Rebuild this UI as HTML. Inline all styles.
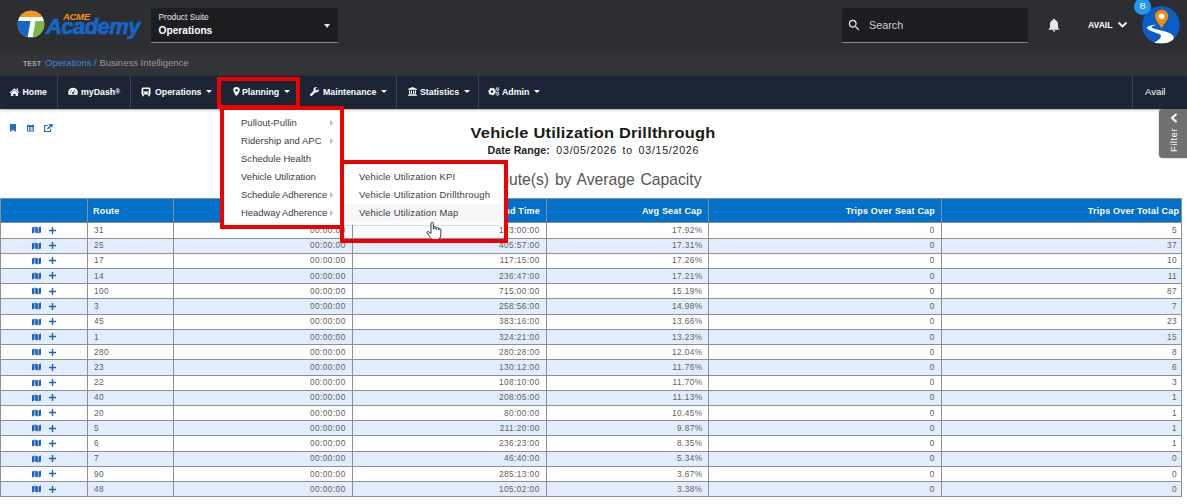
<!DOCTYPE html>
<html><head><meta charset="utf-8">
<style>
*{box-sizing:border-box;margin:0;padding:0}
html,body{width:1187px;height:504px;overflow:hidden;background:#fff;font-family:"Liberation Sans",sans-serif;}
.abs{position:absolute}
#top{position:absolute;left:0;top:0;width:1187px;height:51px;background:#2d2e32}
#crumb{position:absolute;left:0;top:51px;width:1187px;height:25px;background:#333437}
#nav{position:absolute;left:0;top:76px;width:1187px;height:32.6px;background:#1b2535;box-shadow:0 1px 2px rgba(0,0,0,.35)}
.ni{position:absolute;top:0;height:32px;line-height:32px;color:#fff;font-weight:bold;font-size:8.8px;white-space:nowrap}
.ni svg{margin-top:-1.6px}
.sep{position:absolute;top:0;width:1px;height:32px;background:#3a4556}
.caret{display:inline-block;width:0;height:0;border-left:3px solid transparent;border-right:3px solid transparent;border-top:3.2px solid #fff;vertical-align:middle;margin-left:5px;margin-top:-2px}
svg{display:inline-block;vertical-align:middle}
#tbl{position:absolute;left:0px;top:198.4px;width:1181px;border-collapse:collapse;table-layout:fixed;font-size:8.3px;color:#606060;letter-spacing:.42px}
#tbl th{background:#0070c9;color:#fff;font-weight:bold;font-size:9px;height:24px;border:1px solid #8a8f96;text-align:right;padding:0 6px 0 5px;letter-spacing:.2px}
#tbl th.l{text-align:left}
#tbl td{height:15.22px;border:1px solid #8c8f96;text-align:right;padding:0 6.3px 0 5px;line-height:13px}
#tbl th:last-child{padding-right:1.8px}
#tbl td:last-child{padding-right:3.9px}
#tbl td:nth-child(5){padding-right:5.4px}
#tbl td.l{text-align:left;padding-left:6px}
#tbl td.ic{text-align:left;padding:0}
#tbl tr.alt td{background:#e1edfd}
.mp{width:9px;height:8px;fill:#1c63b7;margin-left:31px;margin-top:-1px}
.pl{width:7px;height:7px;fill:#1c63b7;margin-left:8px;margin-top:-1px}
.mi{position:absolute;left:0;height:18px;line-height:18px;font-size:9.5px;color:#3c3c3c;white-space:nowrap;letter-spacing:.02px}
.sm2 .mi{letter-spacing:.17px}
.arr{position:absolute;width:0;height:0;border-top:3px solid transparent;border-bottom:3px solid transparent;border-left:3px solid #bbb}
.red{position:absolute;border:4px solid #ee0000}
</style></head><body>
<div id="top"></div>
<div id="crumb"></div>
<div id="nav"></div>

<!-- logo -->
<svg class="abs" style="left:17px;top:10px" width="28" height="28" viewBox="0 0 28 28">
<defs><clipPath id="lc"><circle cx="14" cy="14" r="13.3"/></clipPath></defs>
<g clip-path="url(#lc)">
<rect x="0" y="0" width="28" height="28" fill="#fff"/>
<rect x="0" y="0" width="28" height="7" fill="#f7931e"/>
<path d="M0 11 H13.5 L10.5 28 H0Z" fill="#1467c8"/>
<path d="M18.5 11 H28 V28 H15.5Z" fill="#7ab648"/>
</g></svg>
<div class="abs" style="left:63px;top:12px;font-size:9.5px;font-weight:bold;font-style:italic;color:#f7931e;line-height:10px;letter-spacing:-0.3px">ACME</div>
<div class="abs" style="left:46px;top:14px;font-size:22px;font-weight:bold;font-style:italic;color:#1467c8;line-height:26px;letter-spacing:-0.55px;-webkit-text-stroke:0.7px #1467c8">Academy</div>

<!-- product suite -->
<div class="abs" style="left:151px;top:8px;width:187px;height:35px;background:#1d1e21;border-bottom:1px solid #8a8a8a;border-radius:3px 3px 0 0"></div>
<div class="abs" style="left:158.5px;top:12px;font-size:8.4px;color:#e6e6e6;line-height:10px">Product Suite</div>
<div class="abs" style="left:158.5px;top:24.6px;font-size:10.2px;font-weight:bold;color:#fff;line-height:12px">Operations</div>
<div class="abs" style="left:324px;top:24px;width:0;height:0;border-left:3.5px solid transparent;border-right:3.5px solid transparent;border-top:4px solid #e6e6e6"></div>

<!-- search -->
<div class="abs" style="left:842px;top:8px;width:186px;height:35px;background:#1d1e21;border-bottom:1px solid #8a8a8a;border-radius:3px 3px 0 0"></div>
<svg class="abs" style="left:847px;top:18px" width="14.5" height="14.5" viewBox="0 0 24 24"><path fill="#e6e6e6" d="M15.5 14h-.79l-.28-.27A6.47 6.47 0 0 0 16 9.5 6.5 6.5 0 1 0 9.500 16c1.610 0 3.090-.59 4.230-1.570l.27.280v.79l5 4.990L20.490 19l-4.990-5zm-6 0C7.010 14 5 11.990 5 9.500S7.010 5 9.500 5 14 7.010 14 9.500 11.990 14 9.500 14z"/></svg>
<div class="abs" style="left:869px;top:19px;font-size:10.8px;color:#cfcfcf;line-height:13px">Search</div>

<!-- bell -->
<svg class="abs" style="left:1046px;top:17px" width="16" height="16" viewBox="0 0 24 24"><path fill="#e8e8e8" d="M12 22c1.100 0 2-.9 2-2h-4c0 1.100.89 2 2 2zm6-6v-5c0-3.070-1.640-5.640-4.500-6.320V4c0-.83-.67-1.500-1.500-1.500s-1.500.67-1.500 1.500v.68C7.630 5.360 6 7.920 6 11v5l-2 2v1h16v-1l-2-2z"/></svg>
<div class="abs" style="left:1088px;top:20px;font-size:8.6px;font-weight:bold;color:#fff;line-height:10px">AVAIL</div>
<svg class="abs" style="left:1117px;top:21px" width="11" height="8" viewBox="0 0 11 8"><path d="M1.5 1.500 L5.500 5.500 L9.500 1.500" fill="none" stroke="#fff" stroke-width="1.800"/></svg>

<!-- avatar -->
<svg class="abs" style="left:1142px;top:6.4px" width="38" height="38" viewBox="0 0 38 38">
<defs><clipPath id="ac"><circle cx="19" cy="19" r="19"/></clipPath></defs>
<g clip-path="url(#ac)">
<circle cx="19" cy="19" r="19" fill="#0a5cc8"/>
<path d="M14.5 18.4 C10 18.800 6 20 5 21.500 C4.500 23.500 10 25.500 16 27.500 C20 29 21 31.500 12 37 L27.500 37.500 C32 34.500 33 31 30 28.500 C26 25 12 23.500 9.500 21.500 C9 20.500 12 19.500 14.500 18.400Z" fill="#fff"/>
<path d="M19.600 3.700 C15.600 3.700 13 6.800 13 10.200 C13 14.200 17.200 17.500 19.600 22.400 C22 17.500 26.200 14.200 26.200 10.200 C26.200 6.800 23.600 3.700 19.600 3.700Z" fill="#f68b00"/>
<circle cx="19.600" cy="10.300" r="2.900" fill="#fff"/>
</g></svg>
<div class="abs" style="left:1134px;top:-2.200px;width:17.400px;height:17.400px;border-radius:50%;background:#2196f3;color:#fff;font-size:8.800px;line-height:17.400px;text-align:center"><span style="display:inline-block;transform:scaleX(1.25)">8</span></div>

<!-- breadcrumb -->
<div class="abs" style="left:23px;top:59px;font-size:6.8px;font-weight:bold;color:#a9a9a9;line-height:10px;letter-spacing:.2px">TEST</div>
<div class="abs" style="left:45px;top:57.4px;font-size:9.5px;line-height:11px;color:#9a9a9a;white-space:nowrap"><span style="color:#2b8be0">Operations /</span> Business Intelligence</div>

<!-- nav items -->
<div class="abs" style="left:0;top:76px;width:1187px;height:32px">
<div class="ni" style="left:8.5px"><svg style="margin-top:-2.8px" width="11" height="9.3" viewBox="0 0 20 17"><path fill="#fff" d="M10 2.500 L1 10 L2.200 11.300 L10 4.800 L17.800 11.300 L19 10 L16 7.500 V2.500 H14 V5.800Z M3.500 11.500 V17 H8 V13 H12 V17 H16.500 V11.500 L10 6Z"/></svg><span style="margin-left:3px">Home</span></div>
<div class="sep" style="left:57px"></div>
<div class="ni" style="left:68px"><svg style="margin-top:-2.8px" width="10" height="9" viewBox="0 0 20 17"><path fill="#fff" d="M10 1 A9.500 9.500 0 0 0 1.500 15 H18.500 A9.500 9.500 0 0 0 10 1Z"/><path d="M10 12 L13.500 6" stroke="#1b2535" stroke-width="1.800"/><circle cx="10" cy="12" r="2" fill="#1b2535"/><circle cx="5" cy="10" r="1" fill="#1b2535"/><circle cx="7" cy="6" r="1" fill="#1b2535"/><circle cx="15.500" cy="10" r="1" fill="#1b2535"/></svg><span style="margin-left:3px">myDash<span style="font-size:6.5px;vertical-align:1.2px;font-weight:bold;line-height:0">®</span></span></div>
<div class="sep" style="left:130px"></div>
<div class="ni" style="left:141px"><svg width="10" height="10" viewBox="0 0 20 20"><path fill="#fff" d="M4 1 H16 A3 3 0 0 1 19 4 V15 H17.500 V17.500 A1.500 1.500 0 0 1 14.500 17.500 V15 H5.500 V17.500 A1.500 1.500 0 0 1 2.500 17.500 V15 H1 V4 A3 3 0 0 1 4 1Z"/><rect x="4.500" y="4.200" width="11" height="4.600" rx="1" fill="#1b2535"/><circle cx="5.500" cy="12" r="1.300" fill="#1b2535"/><circle cx="14.500" cy="12" r="1.300" fill="#1b2535"/></svg><span style="margin-left:4px">Operations</span><span class="caret"></span></div>
<div class="ni" style="left:233px"><svg width="7" height="9" viewBox="0 0 14 18"><path fill="#fff" d="M7 0 A6.500 6.500 0 0 0 .5 6.500 C.5 10.500 7 18 7 18 C7 18 13.500 10.500 13.500 6.500 A6.500 6.500 0 0 0 7 0Z"/><circle cx="7" cy="6.500" r="2.500" fill="#1b2535"/></svg><span style="margin-left:2px">Planning</span><span class="caret"></span></div>
<div class="ni" style="left:310px"><svg width="9" height="9" viewBox="0 0 18 18"><path fill="#fff" d="M17.500 4.200 L14.500 7.200 L11.500 6.500 L10.800 3.500 L13.800 .5 C11.500 -.3 9 .5 7.800 2.500 C6.800 4 6.800 5.800 7.500 7.300 L.8 14 C-.2 15 -.2 16.400 .8 17.300 C1.700 18.200 3.100 18.200 4 17.300 L10.700 10.500 C12.200 11.200 14 11.200 15.500 10.200 C17.500 9 18.300 6.500 17.500 4.200Z"/></svg><span style="margin-left:4px">Maintenance</span><span class="caret"></span></div>
<div class="sep" style="left:396px"></div>
<div class="ni" style="left:408px"><svg width="9" height="9" viewBox="0 0 18 18"><path fill="#fff" d="M9 0 L0 4 V5.500 H18 V4Z M2 7 H4.500 V13.500 H2Z M6 7 H8 V13.500 H6Z M10 7 H12 V13.500 H10Z M13.500 7 H16 V13.500 H13.500Z M1 14.500 H17 V16 H1Z M0 16.500 H18 V18 H0Z"/></svg><span style="margin-left:3px">Statistics</span><span class="caret"></span></div>
<div class="sep" style="left:478px"></div>
<div class="ni" style="left:488px"><svg width="12" height="9" viewBox="0 0 24 18"><circle cx="8" cy="9" r="5.200" fill="none" stroke="#fff" stroke-width="4.500" stroke-dasharray="3.200 1.800"/><circle cx="8" cy="9" r="4.500" fill="none" stroke="#fff" stroke-width="3"/><circle cx="19" cy="4.500" r="2.500" fill="none" stroke="#fff" stroke-width="2.800" stroke-dasharray="1.800 1"/><circle cx="19" cy="13.500" r="2.500" fill="none" stroke="#fff" stroke-width="2.800" stroke-dasharray="1.800 1"/></svg><span style="margin-left:2px">Admin</span><span class="caret"></span></div>
<div class="sep" style="left:1132px"></div>
<div class="ni" style="left:1145px;font-weight:normal;font-size:9.500px">Avail</div>
</div>

<!-- toolbar icons -->
<svg class="abs" style="left:10px;top:123.5px" width="6" height="8" viewBox="0 0 6 8"><path fill="#2a6dbd" d="M0 0H6V8L3 6L0 8Z"/></svg>
<svg class="abs" style="left:27px;top:123.5px" width="7.2" height="8" viewBox="0 0 16 16"><path fill="#1c63b7" d="M3 0h2v2h6V0h2v2h3v14H0V2h3z"/><path fill="#fff" d="M2 6h2.500v8H2z M5.800 6h2v8h-2z M9 6h2v8H9z M12 6h2v8h-2z" opacity=".85"/></svg>
<svg class="abs" style="left:43px;top:122.5px" width="10" height="10" viewBox="0 0 20 20"><path fill="none" stroke="#1c63b7" stroke-width="2.200" d="M15 11.500V17H3V5H9"/><path fill="#1c63b7" d="M11 2H19V10L16 7L10 13L8 11L14 5Z"/></svg>

<!-- titles -->
<div class="abs" id="ttl" style="left:393px;top:122.5px;width:400px;text-align:center;font-size:15.2px;font-weight:bold;color:#1a1a1a;line-height:20px;letter-spacing:.2px;transform:scaleX(1.08);white-space:nowrap">Vehicle Utilization Drillthrough</div>
<div class="abs" id="dr" style="left:487.5px;top:143px;white-space:nowrap;font-size:10.6px;color:#222;line-height:14px"><b style="letter-spacing:.05px">Date Range:</b><span style="margin-left:6.5px;letter-spacing:.75px;word-spacing:2px">03/05/2026 to 03/15/2026</span></div>
<div class="abs" id="sub" style="right:485.5px;top:170px;font-size:15.7px;color:#555;line-height:20px;letter-spacing:0px;word-spacing:1.5px;white-space:nowrap">Top Route(s) by Average Capacity</div>

<!-- table -->
<table id="tbl">
<colgroup><col style="width:87px"><col style="width:86px"><col style="width:179px"><col style="width:194px"><col style="width:162px"><col style="width:233px"><col style="width:240px"></colgroup>
<tr><th></th><th class="l">Route</th><th></th><th>End Time</th><th>Avg Seat Cap</th><th>Trips Over Seat Cap</th><th>Trips Over Total Cap</th></tr>
<tr><td class="ic"><svg class="mp" viewBox="0 0 18 16"><path d="M0 3.2 L5 1.2 V13 L0 15 Z M6.3 1.2 L11.7 3 V14.8 L6.3 13 Z M13 3 L18 1 V12.8 L13 14.8 Z"/></svg><svg class="pl" viewBox="0 0 10 10"><path d="M4 0h2v4h4v2H6v4H4V6H0V4h4z"/></svg></td><td class="l">31</td><td>00:00:00</td><td>173:00:00</td><td>17.92%</td><td>0</td><td>5</td></tr>
<tr class="alt"><td class="ic"><svg class="mp" viewBox="0 0 18 16"><path d="M0 3.2 L5 1.2 V13 L0 15 Z M6.3 1.2 L11.7 3 V14.8 L6.3 13 Z M13 3 L18 1 V12.8 L13 14.8 Z"/></svg><svg class="pl" viewBox="0 0 10 10"><path d="M4 0h2v4h4v2H6v4H4V6H0V4h4z"/></svg></td><td class="l">25</td><td>00:00:00</td><td>405:57:00</td><td>17.31%</td><td>0</td><td>37</td></tr>
<tr><td class="ic"><svg class="mp" viewBox="0 0 18 16"><path d="M0 3.2 L5 1.2 V13 L0 15 Z M6.3 1.2 L11.7 3 V14.8 L6.3 13 Z M13 3 L18 1 V12.8 L13 14.8 Z"/></svg><svg class="pl" viewBox="0 0 10 10"><path d="M4 0h2v4h4v2H6v4H4V6H0V4h4z"/></svg></td><td class="l">17</td><td>00:00:00</td><td>117:15:00</td><td>17.26%</td><td>0</td><td>10</td></tr>
<tr class="alt"><td class="ic"><svg class="mp" viewBox="0 0 18 16"><path d="M0 3.2 L5 1.2 V13 L0 15 Z M6.3 1.2 L11.7 3 V14.8 L6.3 13 Z M13 3 L18 1 V12.8 L13 14.8 Z"/></svg><svg class="pl" viewBox="0 0 10 10"><path d="M4 0h2v4h4v2H6v4H4V6H0V4h4z"/></svg></td><td class="l">14</td><td>00:00:00</td><td>236:47:00</td><td>17.21%</td><td>0</td><td>11</td></tr>
<tr><td class="ic"><svg class="mp" viewBox="0 0 18 16"><path d="M0 3.2 L5 1.2 V13 L0 15 Z M6.3 1.2 L11.7 3 V14.8 L6.3 13 Z M13 3 L18 1 V12.8 L13 14.8 Z"/></svg><svg class="pl" viewBox="0 0 10 10"><path d="M4 0h2v4h4v2H6v4H4V6H0V4h4z"/></svg></td><td class="l">100</td><td>00:00:00</td><td>715:00:00</td><td>15.19%</td><td>0</td><td>87</td></tr>
<tr class="alt"><td class="ic"><svg class="mp" viewBox="0 0 18 16"><path d="M0 3.2 L5 1.2 V13 L0 15 Z M6.3 1.2 L11.7 3 V14.8 L6.3 13 Z M13 3 L18 1 V12.8 L13 14.8 Z"/></svg><svg class="pl" viewBox="0 0 10 10"><path d="M4 0h2v4h4v2H6v4H4V6H0V4h4z"/></svg></td><td class="l">3</td><td>00:00:00</td><td>258:56:00</td><td>14.98%</td><td>0</td><td>7</td></tr>
<tr><td class="ic"><svg class="mp" viewBox="0 0 18 16"><path d="M0 3.2 L5 1.2 V13 L0 15 Z M6.3 1.2 L11.7 3 V14.8 L6.3 13 Z M13 3 L18 1 V12.8 L13 14.8 Z"/></svg><svg class="pl" viewBox="0 0 10 10"><path d="M4 0h2v4h4v2H6v4H4V6H0V4h4z"/></svg></td><td class="l">45</td><td>00:00:00</td><td>383:16:00</td><td>13.66%</td><td>0</td><td>23</td></tr>
<tr class="alt"><td class="ic"><svg class="mp" viewBox="0 0 18 16"><path d="M0 3.2 L5 1.2 V13 L0 15 Z M6.3 1.2 L11.7 3 V14.8 L6.3 13 Z M13 3 L18 1 V12.8 L13 14.8 Z"/></svg><svg class="pl" viewBox="0 0 10 10"><path d="M4 0h2v4h4v2H6v4H4V6H0V4h4z"/></svg></td><td class="l">1</td><td>00:00:00</td><td>324:21:00</td><td>13.23%</td><td>0</td><td>15</td></tr>
<tr><td class="ic"><svg class="mp" viewBox="0 0 18 16"><path d="M0 3.2 L5 1.2 V13 L0 15 Z M6.3 1.2 L11.7 3 V14.8 L6.3 13 Z M13 3 L18 1 V12.8 L13 14.8 Z"/></svg><svg class="pl" viewBox="0 0 10 10"><path d="M4 0h2v4h4v2H6v4H4V6H0V4h4z"/></svg></td><td class="l">280</td><td>00:00:00</td><td>280:28:00</td><td>12.04%</td><td>0</td><td>8</td></tr>
<tr class="alt"><td class="ic"><svg class="mp" viewBox="0 0 18 16"><path d="M0 3.2 L5 1.2 V13 L0 15 Z M6.3 1.2 L11.7 3 V14.8 L6.3 13 Z M13 3 L18 1 V12.8 L13 14.8 Z"/></svg><svg class="pl" viewBox="0 0 10 10"><path d="M4 0h2v4h4v2H6v4H4V6H0V4h4z"/></svg></td><td class="l">23</td><td>00:00:00</td><td>130:12:00</td><td>11.76%</td><td>0</td><td>6</td></tr>
<tr><td class="ic"><svg class="mp" viewBox="0 0 18 16"><path d="M0 3.2 L5 1.2 V13 L0 15 Z M6.3 1.2 L11.7 3 V14.8 L6.3 13 Z M13 3 L18 1 V12.8 L13 14.8 Z"/></svg><svg class="pl" viewBox="0 0 10 10"><path d="M4 0h2v4h4v2H6v4H4V6H0V4h4z"/></svg></td><td class="l">22</td><td>00:00:00</td><td>108:10:00</td><td>11.70%</td><td>0</td><td>3</td></tr>
<tr class="alt"><td class="ic"><svg class="mp" viewBox="0 0 18 16"><path d="M0 3.2 L5 1.2 V13 L0 15 Z M6.3 1.2 L11.7 3 V14.8 L6.3 13 Z M13 3 L18 1 V12.8 L13 14.8 Z"/></svg><svg class="pl" viewBox="0 0 10 10"><path d="M4 0h2v4h4v2H6v4H4V6H0V4h4z"/></svg></td><td class="l">40</td><td>00:00:00</td><td>208:05:00</td><td>11.13%</td><td>0</td><td>1</td></tr>
<tr><td class="ic"><svg class="mp" viewBox="0 0 18 16"><path d="M0 3.2 L5 1.2 V13 L0 15 Z M6.3 1.2 L11.7 3 V14.8 L6.3 13 Z M13 3 L18 1 V12.8 L13 14.8 Z"/></svg><svg class="pl" viewBox="0 0 10 10"><path d="M4 0h2v4h4v2H6v4H4V6H0V4h4z"/></svg></td><td class="l">20</td><td>00:00:00</td><td>80:00:00</td><td>10.45%</td><td>0</td><td>1</td></tr>
<tr class="alt"><td class="ic"><svg class="mp" viewBox="0 0 18 16"><path d="M0 3.2 L5 1.2 V13 L0 15 Z M6.3 1.2 L11.7 3 V14.8 L6.3 13 Z M13 3 L18 1 V12.8 L13 14.8 Z"/></svg><svg class="pl" viewBox="0 0 10 10"><path d="M4 0h2v4h4v2H6v4H4V6H0V4h4z"/></svg></td><td class="l">5</td><td>00:00:00</td><td>211:20:00</td><td>9.87%</td><td>0</td><td>1</td></tr>
<tr><td class="ic"><svg class="mp" viewBox="0 0 18 16"><path d="M0 3.2 L5 1.2 V13 L0 15 Z M6.3 1.2 L11.7 3 V14.8 L6.3 13 Z M13 3 L18 1 V12.8 L13 14.8 Z"/></svg><svg class="pl" viewBox="0 0 10 10"><path d="M4 0h2v4h4v2H6v4H4V6H0V4h4z"/></svg></td><td class="l">6</td><td>00:00:00</td><td>236:23:00</td><td>8.35%</td><td>0</td><td>1</td></tr>
<tr class="alt"><td class="ic"><svg class="mp" viewBox="0 0 18 16"><path d="M0 3.2 L5 1.2 V13 L0 15 Z M6.3 1.2 L11.7 3 V14.8 L6.3 13 Z M13 3 L18 1 V12.8 L13 14.8 Z"/></svg><svg class="pl" viewBox="0 0 10 10"><path d="M4 0h2v4h4v2H6v4H4V6H0V4h4z"/></svg></td><td class="l">7</td><td>00:00:00</td><td>46:40:00</td><td>5.34%</td><td>0</td><td>0</td></tr>
<tr><td class="ic"><svg class="mp" viewBox="0 0 18 16"><path d="M0 3.2 L5 1.2 V13 L0 15 Z M6.3 1.2 L11.7 3 V14.8 L6.3 13 Z M13 3 L18 1 V12.8 L13 14.8 Z"/></svg><svg class="pl" viewBox="0 0 10 10"><path d="M4 0h2v4h4v2H6v4H4V6H0V4h4z"/></svg></td><td class="l">90</td><td>00:00:00</td><td>285:13:00</td><td>3.67%</td><td>0</td><td>0</td></tr>
<tr class="alt"><td class="ic"><svg class="mp" viewBox="0 0 18 16"><path d="M0 3.2 L5 1.2 V13 L0 15 Z M6.3 1.2 L11.7 3 V14.8 L6.3 13 Z M13 3 L18 1 V12.8 L13 14.8 Z"/></svg><svg class="pl" viewBox="0 0 10 10"><path d="M4 0h2v4h4v2H6v4H4V6H0V4h4z"/></svg></td><td class="l">48</td><td>00:00:00</td><td>105:02:00</td><td>3.38%</td><td>0</td><td>0</td></tr>
</table>

<!-- filter tab -->
<div class="abs" style="left:1159.4px;top:109px;width:30px;height:49px;background:#707070;border-radius:4px 0 0 4px;box-shadow:0 0 2px rgba(0,0,0,.4)"></div>
<svg class="abs" style="left:1170px;top:113px" width="8" height="10" viewBox="0 0 8 10"><path d="M6.500 1L2 5L6.500 9" fill="none" stroke="#fff" stroke-width="2"/></svg>
<div class="abs" style="left:1154px;top:134px;width:40px;height:12px;transform:rotate(-90deg);color:#fff;font-size:9.500px;line-height:12px;text-align:center;letter-spacing:.5px">Filter</div>

<!-- dropdown 1 -->
<div class="abs" style="left:222px;top:108px;width:120px;height:116px;background:#fff"></div>
<div class="abs" style="left:241px;top:113.7px;width:100px">
<div class="mi" style="top:0">Pullout-Pullin</div>
<div class="mi" style="top:18px">Ridership and APC</div>
<div class="mi" style="top:36px">Schedule Health</div>
<div class="mi" style="top:54px">Vehicle Utilization</div>
<div class="mi" style="top:72px;letter-spacing:-.08px">Schedule Adherence</div>
<div class="mi" style="top:90px;letter-spacing:-.08px">Headway Adherence</div>
<div class="arr" style="left:89px;top:6px"></div>
<div class="arr" style="left:89px;top:24px"></div>
<div class="arr" style="left:89px;top:78px"></div>
<div class="arr" style="left:89px;top:96px"></div>
</div>

<!-- dropdown 2 -->
<div class="abs" style="left:343px;top:164px;width:161px;height:60.5px;background:#fff;box-shadow:0 1px 1px rgba(0,0,0,.12)"></div>
<div class="abs" style="left:344px;top:203.5px;width:160px;height:17px;background:#f6f7f8"></div>
<div class="abs sm2" style="left:359px;top:167.8px;width:140px">
<div class="mi" style="top:0">Vehicle Utilization KPI</div>
<div class="mi" style="top:18px">Vehicle Utilization Drillthrough</div>
<div class="mi" style="top:36px">Vehicle Utilization Map</div>
</div>

<!-- cursor -->
<svg class="abs" style="left:426px;top:221px" width="16" height="20" viewBox="0 0 16 20"><path d="M5 9.500V2.500a1.200 1.200 0 0 1 2.400 0V8h.4V6.800a1.100 1.100 0 0 1 2.200 0V8.300h.4V7.600a1.100 1.100 0 0 1 2.200 0V9h.3V8.600a1 1 0 0 1 2 0V13c0 3-1.500 5.500-3 5.500H7c-1.500 0-2.500-1.500-3.500-3L1.300 12c-.6-1 .5-2 1.500-1.200L5 12.500z" fill="#fff" stroke="#222" stroke-width=".9"/></svg>

<!-- red boxes -->
<div class="red" style="left:217px;top:77px;width:83px;height:32px"></div>
<div class="red" style="left:220px;top:106px;width:124px;height:123px"></div>
<div class="red" style="left:340px;top:160px;width:167.6px;height:83px"></div>


</body></html>
